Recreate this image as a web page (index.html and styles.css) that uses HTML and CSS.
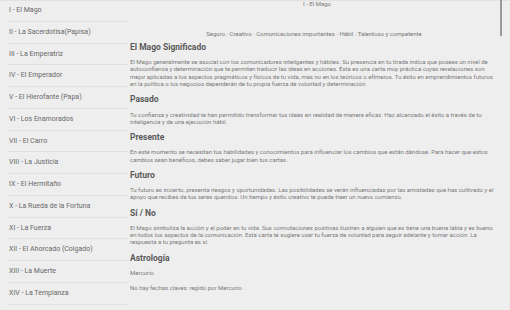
FILE: index.html
```html
<!DOCTYPE html>
<html lang="es">
<head>
<meta charset="utf-8">
<title>I - El Mago</title>
<link rel="stylesheet" href="styles.css">
</head>
<body>
<div class="app">
  <ul class="cards">
    <li class="card">I - El Mago</li>
    <li class="card">II - La Sacerdotisa(Papisa)</li>
    <li class="card">III - La Emperatriz</li>
    <li class="card">IV - El Emperador</li>
    <li class="card">V - El Hierofante (Papa)</li>
    <li class="card">VI - Los Enamorados</li>
    <li class="card">VII - El Carro</li>
    <li class="card">VIII - La Justicia</li>
    <li class="card">IX - El Hermitaño</li>
    <li class="card">X - La Rueda de la Fortuna</li>
    <li class="card">XI - La Fuerza</li>
    <li class="card">XII - El Ahorcado (Colgado)</li>
    <li class="card">XIII - La Muerte</li>
    <li class="card">XIV - La Templanza</li>
  </ul>
  <main class="detail">
    <div class="title">I - El Mago</div>
    <div class="keywords">Seguro · Creativo · Comunicaciones importantes · Hábil · Talentoso y competente</div>
    <h2 class="heading first">El Mago Significado</h2>
    <p class="text">El Mago generalmente se asocial con los comunicadores inteligentes y hábiles. Su presencia en tu tirada indica que posees un nivel de autoconfianza y determinación que te permiten traducir las ideas en acciones. Ésta es una carta muy práctica cuyas revelaciones son mejor aplicadas a los aspectos pragmáticos y físicos de tu vida, mas no en los teóricos o efímeros. Tu éxito en emprendimientos futuros en la política o los negocios dependerán de tu propia fuerza de voluntad y determinación.</p>
    <h2 class="heading">Pasado</h2>
    <p class="text">Tu confianza y creatividad te han permitido transformar tus ideas en realidad de manera eficaz. Haz alcanzado el éxito a través de tu inteligencia y de una ejecución hábil.</p>
    <h2 class="heading">Presente</h2>
    <p class="text">En este momento se necesitan tus habilidades y conocimientos para influenciar los cambios que están dándose. Para hacer que estos cambios sean benéficos, debes saber jugar bien tus cartas.</p>
    <h2 class="heading">Futuro</h2>
    <p class="text">Tu futuro es incierto, presenta riesgos y oportunidades. Las posibilidades se verán influenciadas por las amistades que has cultivado y el apoyo que recibes de tus seres queridos. Un tiempo y éxito creativo te puede traer un nuevo comienzo.</p>
    <h2 class="heading">Sí / No</h2>
    <p class="text">El Mago simboliza la acción y el poder en tu vida. Sus connotaciones positivas ilustran a alguien que es tiene una buena labia y es bueno en todos los aspectos de la comunicación. Esta carta te sugiere usar tu fuerza de voluntad para seguir adelante y tomar acción. La respuesta a tu pregunta es sí.</p>
    <h2 class="heading">Astrología</h2>
    <p class="text">Mercurio</p>
    <p class="text next">No hay fechas claves: regido por Mercurio</p>
  </main>
  <div class="scrollbar"></div>
</div>
</body>
</html>
```
FILE: styles.css
```css
html, body {
  margin: 0;
  padding: 0;
  background: #eeeeee;
  font-family: Roboto, "Liberation Sans", sans-serif;
}
.app {
  position: relative;
  display: grid;
  grid-template-columns: 128px 1fr;
  column-gap: 2px;
  width: 510px;
  height: 310px;
  overflow: hidden;
  box-shadow: inset 0 1px 1px rgba(0,0,0,0.06);
}
.cards {
  list-style: none;
  margin: 0 0 0 8px;
  padding: 0;
}
.card {
  height: 20.75px;
  line-height: 20.75px;
  padding-left: 1px;
  border-bottom: 1px solid #e0e0e0;
  font-size: 7px;
  color: #686868;
  white-space: nowrap;
}
.detail {
  width: 366px;
  color: #777;
}
.title {
  padding-left: 8px;
  text-align: center;
  font-size: 6px;
  line-height: 8px;
  color: #777;
}
.keywords {
  margin-top: 22px;
  padding-left: 2px;
  text-align: center;
  font-size: 6px;
  line-height: 8px;
  color: #777;
}
.heading {
  margin: 6.85px 0 0;
  font-size: 8.5px;
  line-height: 10px;
  font-weight: bold;
  color: #5a5a5a;
}
.heading.first {
  margin-top: 3.8px;
}
.text {
  margin: 6.35px 0 0;
  font-size: 6px;
  line-height: 7.3px;
  color: #7a7a7a;
}
.text.next {
  margin-top: 7.7px;
}
.scrollbar {
  position: absolute;
  left: 500px;
  top: 0;
  width: 2px;
  height: 36px;
  background: #9a9a9a;
}
```
